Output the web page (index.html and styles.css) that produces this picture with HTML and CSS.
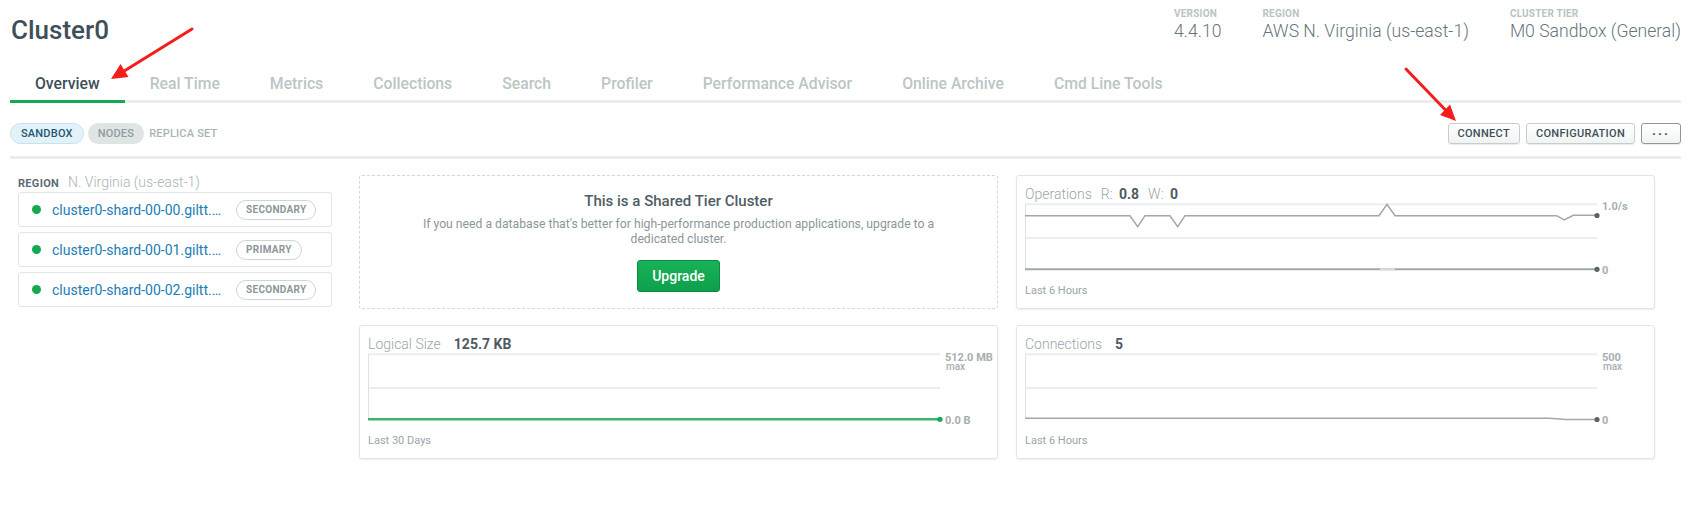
FILE: index.html
```html
<!DOCTYPE html>
<html lang="en">
<head>
<meta charset="utf-8">
<title>Cluster0 - Overview</title>
<link rel="stylesheet" href="styles.css">
</head>
<body>
<div class="page">
  <header class="header">
    <h1 class="title">Cluster0</h1>
    <div class="meta">
      <div class="meta-item"><div class="meta-label">Version</div><div class="meta-value">4.4.10</div></div>
      <div class="meta-item"><div class="meta-label">Region</div><div class="meta-value">AWS N. Virginia (us-east-1)</div></div>
      <div class="meta-item"><div class="meta-label">Cluster Tier</div><div class="meta-value">M0 Sandbox (General)</div></div>
    </div>
  </header>

  <nav class="tabs">
    <a class="tab active">Overview</a>
    <a class="tab">Real Time</a>
    <a class="tab">Metrics</a>
    <a class="tab">Collections</a>
    <a class="tab">Search</a>
    <a class="tab">Profiler</a>
    <a class="tab">Performance Advisor</a>
    <a class="tab">Online Archive</a>
    <a class="tab">Cmd Line Tools</a>
  </nav>

  <div class="toolbar">
    <div class="pills">
      <span class="pill pill-blue">Sandbox</span>
      <span class="pill pill-gray">Nodes</span>
      <span class="pill pill-plain">Replica Set</span>
    </div>
    <div class="actions">
      <button class="btn">Connect</button>
      <button class="btn">Configuration</button>
      <button class="btn btn-more">&middot;&middot;&middot;</button>
    </div>
  </div>

  <main class="content">
    <section class="nodes">
      <div class="region"><span class="region-label">Region</span><span class="region-name">N. Virginia (us-east-1)</span></div>
      <div class="node"><span class="dot"></span><a class="host" title="cluster0-shard-00-00.giltt.mongodb.net:27017">cluster0-shard-00-00.giltt.…</a><span class="role">Secondary</span></div>
      <div class="node"><span class="dot"></span><a class="host" title="cluster0-shard-00-01.giltt.mongodb.net:27017">cluster0-shard-00-01.giltt.…</a><span class="role">Primary</span></div>
      <div class="node"><span class="dot"></span><a class="host" title="cluster0-shard-00-02.giltt.mongodb.net:27017">cluster0-shard-00-02.giltt.…</a><span class="role">Secondary</span></div>
    </section>

    <section class="grid">
      <div class="shared">
        <h2 class="shared-title">This is a Shared Tier Cluster</h2>
        <p class="shared-text">If you need a database that's better for high-performance production applications, upgrade to a dedicated cluster.</p>
        <button class="upgrade">Upgrade</button>
      </div>

      <div class="card">
        <div class="card-head"><span class="metric">Operations</span><span class="kv">R: <b>0.8</b></span><span class="kv">W: <b>0</b></span></div>
        <svg class="chart" width="625" height="72" viewBox="0 0 625 72">
          <line class="grid-line" x1="0" y1="2.3" x2="572" y2="2.3"/>
          <line class="grid-line" x1="0" y1="36" x2="572" y2="36"/>
          <line class="axis" x1="0.5" y1="2" x2="0.5" y2="67"/>
          <polyline class="series" points="0,13.7 105,13.7 112.7,24.7 120,13.7 145,13.7 152.7,24.7 160,13.7 354,13.7 362,2.3 370,13.7 531.7,13.7 539.3,18 548.3,13.3 572,13.3"/>
          <circle class="pt" cx="572" cy="13.5" r="2.6"/>
          <line class="series-w" x1="0" y1="67.3" x2="572" y2="67.3"/>
          <line class="series-w-light" x1="355" y1="67.3" x2="370" y2="67.3"/>
          <circle class="pt" cx="572" cy="67.3" r="2.6"/>
          <text class="ylab" x="577" y="7.5">1.0/s</text>
          <text class="ylab" x="577" y="71.5">0</text>
        </svg>
        <div class="card-foot">Last 6 Hours</div>
      </div>

      <div class="card">
        <div class="card-head"><span class="metric">Logical Size</span><b class="value">125.7 KB</b></div>
        <svg class="chart" width="625" height="72" viewBox="0 0 625 72">
          <line class="grid-line" x1="0" y1="2.3" x2="572" y2="2.3"/>
          <line class="grid-line" x1="0" y1="36" x2="572" y2="36"/>
          <line class="axis" x1="0.5" y1="2" x2="0.5" y2="67"/>
          <line class="series-green" x1="0" y1="67.3" x2="572" y2="67.3"/>
          <circle class="pt-green" cx="572" cy="67.3" r="2.6"/>
          <text class="ylab" x="577" y="8.5">512.0 MB</text>
          <text class="ylab-sm" x="578" y="18">max</text>
          <text class="ylab" x="577" y="71.5">0.0 B</text>
        </svg>
        <div class="card-foot">Last 30 Days</div>
      </div>

      <div class="card">
        <div class="card-head"><span class="metric">Connections</span><b class="value">5</b></div>
        <svg class="chart" width="625" height="72" viewBox="0 0 625 72">
          <line class="grid-line" x1="0" y1="2.3" x2="572" y2="2.3"/>
          <line class="grid-line" x1="0" y1="36" x2="572" y2="36"/>
          <line class="axis" x1="0.5" y1="2" x2="0.5" y2="67"/>
          <polyline class="series" points="0,66.3 524,66.3 541,67.6 572,67.6"/>
          <circle class="pt" cx="572" cy="67.5" r="2.6"/>
          <text class="ylab" x="577" y="8.5">500</text>
          <text class="ylab-sm" x="578" y="18">max</text>
          <text class="ylab" x="577" y="71.5">0</text>
        </svg>
        <div class="card-foot">Last 6 Hours</div>
      </div>
    </section>
  </main>

  <svg class="annotations" width="1701" height="507" viewBox="0 0 1701 507" aria-hidden="true">
    <line class="arrow-line" x1="192" y1="29" x2="125" y2="70.5"/>
    <polygon class="arrow-head" points="111,79 128.5,77 120.5,64"/>
    <line class="arrow-line" x1="1406" y1="69" x2="1445" y2="109.5"/>
    <polygon class="arrow-head" points="1456,121 1440,115 1450,104.5"/>
  </svg>
</div>
</body>
</html>
```

FILE: styles.css
```css
* { box-sizing: border-box; }

html, body {
  margin: 0;
  padding: 0;
  background: #fff;
}

body {
  font-family: Roboto, "Liberation Sans", Arial, sans-serif;
  color: #3d4f58;
}

.page {
  position: relative;
  width: 1701px;
  height: 507px;
  padding: 0 20px 0 10px;
  overflow: hidden;
}

/* Header */
.header {
  display: flex;
  justify-content: space-between;
  align-items: flex-start;
  height: 46px;
}

.title {
  margin: 14px 0 0 1px;
  font-size: 26px;
  line-height: 32px;
  font-weight: 500;
  color: #3d4f58;
}

.meta {
  display: flex;
  gap: 41px;
  padding-top: 8px;
}

.meta-label {
  font-size: 10px;
  line-height: 11px;
  font-weight: 700;
  text-transform: uppercase;
  letter-spacing: 0.2px;
  color: #b8c4c2;
}

.meta-value {
  margin-top: 3px;
  font-size: 17.6px;
  line-height: 18px;
  font-weight: 300;
  color: #66757c;
}

/* Tabs */
.tabs {
  display: flex;
  padding-top: 28px;
  border-bottom: 3px solid #e7eeec;
}

.tab {
  padding: 0 25px 6px;
  margin-bottom: -3px;
  border-bottom: 3px solid transparent;
  font-size: 15.75px;
  line-height: 20px;
  font-weight: 500;
  color: #bcc5c6;
  cursor: pointer;
}

.tab.active {
  color: #3d4f58;
  border-bottom-color: #13aa52;
}

/* Toolbar */
.toolbar {
  display: flex;
  justify-content: space-between;
  align-items: center;
  padding: 20px 0 12px;
  border-bottom: 3px solid #e7eeec;
}

.pills {
  display: flex;
  align-items: center;
  gap: 4px;
}

.pill {
  display: inline-flex;
  align-items: center;
  height: 21px;
  padding: 0 10px;
  border-radius: 11px;
  font-size: 11px;
  font-weight: 500;
  text-transform: uppercase;
  letter-spacing: 0.2px;
}

.pill-blue {
  background: #e3f2f8;
  border: 1px solid #c4e3f0;
  color: #1d5775;
}

.pill-gray {
  background: #dfe4e5;
  color: #8f9b9f;
}

.pill-plain {
  padding: 0 0 0 1px;
  color: #a9b3b6;
}

.actions {
  display: flex;
  gap: 6px;
}

.btn {
  height: 21px;
  padding: 0 9px;
  border: 1px solid #c5cdcf;
  border-radius: 3px;
  background: linear-gradient(#ffffff, #f1f3f3);
  box-shadow: 0 1px 1px rgba(0, 0, 0, 0.08);
  font-family: inherit;
  font-size: 11px;
  font-weight: 500;
  letter-spacing: 0.3px;
  text-transform: uppercase;
  color: #3d4f58;
}

.btn-more {
  width: 40px;
  padding: 0;
  border-color: #8c989c;
  font-size: 13px;
  font-weight: 700;
  letter-spacing: 2px;
  line-height: 1;
}

/* Content */
.content {
  display: flex;
  padding: 16px 0 0 8px;
}

.nodes {
  width: 314px;
  flex: none;
}

.region {
  display: flex;
  align-items: baseline;
  gap: 9px;
  line-height: 14px;
  margin-bottom: 1px;
}

.region-label {
  font-size: 11px;
  font-weight: 700;
  text-transform: uppercase;
  letter-spacing: 0.3px;
  color: #5d6c74;
}

.region-name {
  font-size: 14px;
  font-weight: 300;
  color: #a9b3b6;
}

.node {
  display: flex;
  align-items: center;
  height: 35px;
  margin-bottom: 5px;
  padding: 0 13px;
  border: 1px solid #e1e5e6;
  border-radius: 3px;
}

.dot {
  flex: none;
  width: 9px;
  height: 9px;
  border-radius: 50%;
  background: #13aa52;
  margin-right: 11px;
}

.host {
  width: 170px;
  flex: none;
  white-space: nowrap;
  font-size: 14px;
  color: #1a7eb4;
  cursor: pointer;
}

.role {
  margin-left: 14px;
  display: inline-flex;
  align-items: center;
  height: 20px;
  padding: 0 9px;
  border: 1px solid #cdd4d6;
  border-radius: 10px;
  font-size: 10px;
  font-weight: 700;
  text-transform: uppercase;
  letter-spacing: 0.3px;
  color: #8b979b;
}

.grid {
  display: grid;
  grid-template-columns: 639px 639px;
  column-gap: 18px;
  row-gap: 16px;
  margin-left: 27px;
}

.shared {
  height: 134px;
  padding-top: 15px;
  border: 1px dashed #d3d8da;
  border-radius: 3px;
  text-align: center;
}

.shared-title {
  margin: 0;
  font-size: 15px;
  line-height: 20px;
  font-weight: 500;
  color: #4f5d65;
}

.shared-text {
  margin: 6px auto 0;
  max-width: 540px;
  font-size: 12.2px;
  line-height: 15px;
  color: #8b979b;
}

.upgrade {
  margin-top: 13px;
  height: 32px;
  padding: 0 14px;
  border: 1px solid #0c8a44;
  border-radius: 3px;
  background: linear-gradient(#18b25a, #0f9f4c);
  font-family: inherit;
  font-size: 14px;
  font-weight: 500;
  color: #fff;
}

.card {
  height: 134px;
  padding: 10px 0 0 8px;
  border: 1px solid #e1e5e6;
  border-radius: 3px;
  box-shadow: 0 1px 2px rgba(0, 0, 0, 0.08);
  overflow: hidden;
}

.card-head {
  display: flex;
  align-items: baseline;
  font-size: 14px;
  line-height: 16px;
  font-weight: 300;
  color: #9aa5a9;
}

.metric { margin-right: 9px; }
.kv { margin-right: 9px; }
.kv b { margin-left: 3px; }

.card-head b {
  font-weight: 700;
  color: #4f5b61;
}

.card-head .value { margin-left: 4px; }

.chart {
  display: block;
  overflow: visible;
}

.grid-line { stroke: #ebeeef; stroke-width: 2; }
.axis { stroke: #dfe3e4; stroke-width: 1; }
.series { fill: none; stroke: #a0a8ab; stroke-width: 1.5; stroke-linejoin: miter; }
.series-w { stroke: #a0a8ab; stroke-width: 2; }
.series-w-light { stroke: #d9dddf; stroke-width: 2; }
.series-green { stroke: #3cb46a; stroke-width: 2.5; }
.pt { fill: #5d6368; }
.pt-green { fill: #13aa52; }

.ylab {
  font-family: Roboto, "Liberation Sans", Arial, sans-serif;
  font-size: 11px;
  font-weight: 700;
  fill: #a6aeb1;
}

.ylab-sm {
  font-family: Roboto, "Liberation Sans", Arial, sans-serif;
  font-size: 10px;
  font-weight: 500;
  fill: #a6aeb1;
}

.card-foot {
  margin-top: 10px;
  font-size: 11px;
  line-height: 13px;
  color: #9aa5a9;
}

/* Annotation arrows drawn over the screenshot */
.annotations {
  position: absolute;
  left: 0;
  top: 0;
  pointer-events: none;
}

.arrow-line {
  stroke: #f41d1d;
  stroke-width: 3;
  stroke-linecap: round;
}

.arrow-head {
  fill: #f41d1d;
}
```
